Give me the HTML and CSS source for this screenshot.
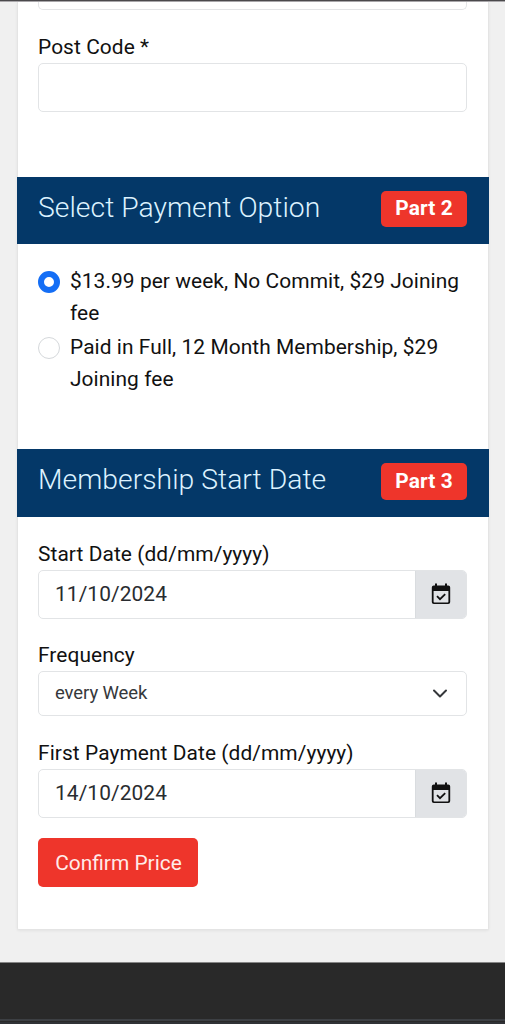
FILE: index.html
```html
<!DOCTYPE html>
<html lang="en">
<head>
<meta charset="utf-8">
<title>Membership</title>
<link rel="stylesheet" href="styles.css">
</head>
<body>
<svg class="defs" aria-hidden="true">
  <symbol id="calendar-check" viewBox="0 0 20 22">
    <path fill="currentColor" fill-rule="evenodd" d="M4 .5h2v2h8v-2h2v2h1.200a2 2 0 0 1 2 2v14.500a2 2 0 0 1-2 2H2.800a2 2 0 0 1-2-2V4.500a2 2 0 0 1 2-2H4zM2.600 8v10.700q0 .7.7.7h13.400q.7 0 .7-.7V8z"/>
    <path fill="none" stroke="currentColor" stroke-width="1.800" d="m6 13.200 3 3 5.200-5"/>
  </symbol>
</svg>
<div class="topbar"></div>
<main class="page">
  <form class="card">
    <section class="address">
      <div class="stub"></div>
      <label class="label">Post Code *</label>
      <div class="control"></div>
    </section>
    <header class="heading"><h2>Select Payment Option</h2><span class="badge">Part 2</span></header>
    <section class="options">
      <label class="option"><span class="radio checked"></span><span>$13.99 per week, No Commit, $29 Joining fee</span></label>
      <label class="option"><span class="radio"></span><span>Paid in Full, 12 Month Membership, $29 Joining fee</span></label>
    </section>
    <header class="heading second"><h2>Membership Start Date</h2><span class="badge">Part 3</span></header>
    <section class="dates">
      <label class="label">Start Date (dd/mm/yyyy)</label>
      <div class="control group"><span class="value">11/10/2024</span><span class="addon"><svg class="calendar"><use href="#calendar-check"/></svg></span></div>
      <label class="label">Frequency</label>
      <div class="control select"><span>every Week</span><svg class="chevron" viewBox="0 0 16 10"><path d="m2 1.500 6 6 6-6"/></svg></div>
      <label class="label">First Payment Date (dd/mm/yyyy)</label>
      <div class="control group"><span class="value">14/10/2024</span><span class="addon"><svg class="calendar"><use href="#calendar-check"/></svg></span></div>
      <button type="button" class="confirm">Confirm Price</button>
    </section>
  </form>
</main>
<footer class="footer"></footer>
</body>
</html>
```
FILE: styles.css
```css
* { box-sizing: border-box; }
html, body { height: 100%; }
body {
  margin: 0;
  display: flex;
  flex-direction: column;
  overflow: hidden;
  background: #f0f0f0;
  color: #111;
  font: 20.9px/31.5px Roboto, sans-serif;
  letter-spacing: 0.08px;
}
.defs { display: none; }
.topbar { height: 2px; flex: none; background: #4b494c; border-bottom: 1px solid #aaa8ab; }
.page { height: 960px; flex: none; padding: 0 16px 32px 17px; }
.card {
  height: 928px;
  border: 1px solid #e4e4e4;
  border-top: 0;
  border-radius: 0 0 2px 2px;
  background: #fff;
  box-shadow: 0 1px 3px rgba(0, 0, 0, .06);
}
.address { height: 175px; padding: 0 21px 0 20px; }
.stub { height: 8px; border: 1px solid #e4e5e7; border-top: 0; border-radius: 0 0 5px 5px; }
.label { display: block; height: 32px; padding-top: 1px; }
.stub + .label { margin-top: 21px; }
.control { height: 49px; border: 1px solid #e2e4e6; border-radius: 5px; background: #fff; }
.heading {
  display: flex;
  align-items: flex-start;
  justify-content: space-between;
  height: 67px;
  margin: 0 -1px;
  padding: 14px 22px 0 21px;
  background: #043868;
}
.heading.second { height: 68px; }
h2 { margin: 0; padding-top: 1px; color: #dcf2ff; font-size: 28.3px; line-height: 32px; font-weight: 300; letter-spacing: 0.03px; }
.badge {
  width: 86px;
  height: 36px;
  border-radius: 5px;
  background: #ee352b;
  color: #fff;
  font-size: 20.9px;
  font-weight: 700;
  line-height: 34px;
  text-align: center;
}
.second .badge { height: 37px; line-height: 36px; }
.options { display: flex; flex-direction: column; gap: 3px; height: 205px; padding: 22px 20px 0; }
.option { display: flex; gap: 10px; letter-spacing: 0.07px; }
.radio { flex: none; width: 22px; height: 22px; margin-top: 5px; border: 1px solid #d5d8db; border-radius: 50%; }
.radio.checked { border: 6px solid #146ef5; }
.dates { padding: 21px 21px 0 20px; }
.group { display: flex; margin-bottom: 21px; color: #292c30; overflow: hidden; }
.value { flex: 1; padding-left: 16px; line-height: 47px; letter-spacing: 0.08px; }
.addon { display: flex; align-items: center; justify-content: center; width: 51px; padding: 0 1px 2px 0; border-left: 1px solid #d9dcdf; background: #e1e3e6; color: #111; }
.calendar { width: 20px; height: 22px; }
.group + .label { margin-top: -1px; }
.select { display: flex; align-items: center; justify-content: space-between; height: 45px; margin-bottom: 21px; padding: 0 18px 0 16px; color: #35383b; font-size: 18.5px; letter-spacing: -0.09px; }
.chevron { width: 16px; height: 10px; margin-top: 1px; fill: none; stroke: #34373a; stroke-width: 2; stroke-linecap: round; stroke-linejoin: round; }
.confirm { display: block; width: 160px; height: 49px; margin-top: -1px; border: 0; border-radius: 5px; padding: 2px 0 0 1px; background: #ee352b; color: #ffebe9; font: inherit; letter-spacing: 0; }
.footer { flex: 1; background: #292929; border-top: 1px solid #858585; border-bottom: 2px solid #303236; }
.footer::before { content: ""; display: block; height: 2px; margin-top: 56px; background: #3c3f43; }
```
